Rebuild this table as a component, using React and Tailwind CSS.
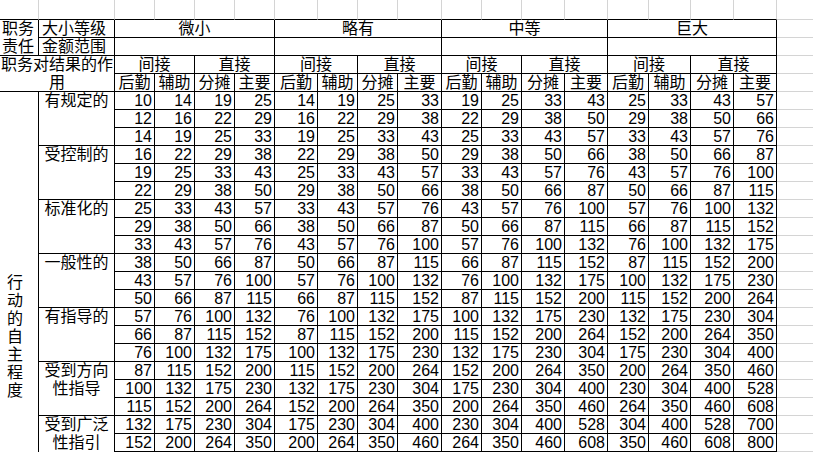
const SEQ = [10, 12, 14, 16, 19, 22, 25, 29, 33, 38, 43, 50, 57, 66, 76, 87, 100, 115, 132, 152, 175, 200, 230, 264, 304, 350, 400, 460, 528, 608, 700, 800];

const GROUPS = ['微小', '略有', '中等', '巨大'];
const ROLES = ['后勤', '辅助', '分摊', '主要'];

// 行动的自主程度 — each level covers a few rows of the table
const LEVELS = [
  { label: '有规定的', rows: 3 },
  { label: '受控制的', rows: 3 },
  { label: '标准化的', rows: 3 },
  { label: '一般性的', rows: 3 },
  { label: '有指导的', rows: 3 },
  { label: '受到方向性指导', rows: 3 },
  { label: '受到广泛性指引', rows: 2 },
];

const SPAN_CLASS = { 2: 'row-span-2', 3: 'row-span-3' };

const cell = 'border-r border-b border-black';
const grid = 'border-b border-[#d4d4d4]';

export default function App() {
  const rows = [];
  let levelIndex = 0;
  let levelStart = 0;

  for (let i = 0; i < 20; i++) {
    const level = LEVELS[levelIndex];
    const items = [];

    if (i === 0) {
      items.push(
        <div key="side" className="row-span-20 flex flex-col border-r border-black pl-[7px] pt-[182px]">
          {Array.from('行动的自主程度').map((ch, k) => (
            <span key={k}>{ch}</span>
          ))}
        </div>
      );
    }

    if (i === levelStart) {
      const last = levelIndex === LEVELS.length - 1;
      items.push(
        <div
          key="level"
          className={`${SPAN_CLASS[level.rows]} border-r border-black px-[4px] text-center ${last ? '' : 'border-b'}`}
        >
          {level.label}
        </div>
      );
    }

    for (let g = 0; g < 4; g++) {
      for (let k = 0; k < 4; k++) {
        items.push(
          <div key={`${g}-${k}`} className={`${cell} pr-[2px] text-right`}>
            {SEQ[i + 2 * g + 2 * k]}
          </div>
        );
      }
    }
    items.push(<div key="rest" className={grid} />);

    rows.push(...items.map((el) => ({ el, key: `${i}-${el.key}` })));

    if (i === levelStart + level.rows - 1) {
      levelStart = i + 1;
      levelIndex += 1;
    }
  }

  return (
    <div className="h-[453px] w-[813px] overflow-hidden bg-white text-[16px] leading-[18px] text-black font-['Liberation_Sans','Noto_Sans_CJK_SC',sans-serif]">
      <div className="grid grid-cols-[39px_76px_40px_40px_40px_40px_43px_40px_40px_44px_40px_40px_43px_43px_41px_42px_43px_43px_36px] grid-rows-[20px_repeat(24,18px)]">
        {/* partial sheet row above the table */}
        {Array.from({ length: 19 }).map((_, k) => (
          <div
            key={`top-${k}`}
            className={k < 18 ? 'border-r border-b border-r-[#d4d4d4] border-b-black' : 'border-b border-[#d4d4d4]'}
          />
        ))}

        {/* 大小等级 */}
        <div className={`row-span-2 ${cell} pl-[2px]`}>职务责任</div>
        <div className={`${cell} pl-[3px]`}>大小等级</div>
        {GROUPS.map((g) => (
          <div key={g} className={`col-span-4 ${cell} text-center`}>
            {g}
          </div>
        ))}
        <div className={grid} />

        {/* 金额范围 */}
        <div className={`${cell} pl-[3px]`}>金额范围</div>
        {GROUPS.map((g) => (
          <div key={`amt-${g}`} className={`col-span-4 ${cell}`} />
        ))}
        <div className={grid} />

        {/* 间接 / 直接 */}
        <div className={`col-span-2 row-span-2 ${cell} text-center`}>职务对结果的作用</div>
        {GROUPS.map((g) => (
          <div key={`kind-${g}`} className="contents">
            <div className={`col-span-2 ${cell} text-center`}>间接</div>
            <div className={`col-span-2 ${cell} text-center`}>直接</div>
          </div>
        ))}
        <div className={grid} />

        {/* 后勤 辅助 分摊 主要 */}
        {GROUPS.map((g) =>
          ROLES.map((r) => (
            <div key={`${g}-${r}`} className={`${cell} text-center`}>
              {r}
            </div>
          ))
        )}
        <div className={grid} />

        {rows.map(({ el, key }) => (
          <div key={key} className="contents">
            {el}
          </div>
        ))}
      </div>
    </div>
  );
}
